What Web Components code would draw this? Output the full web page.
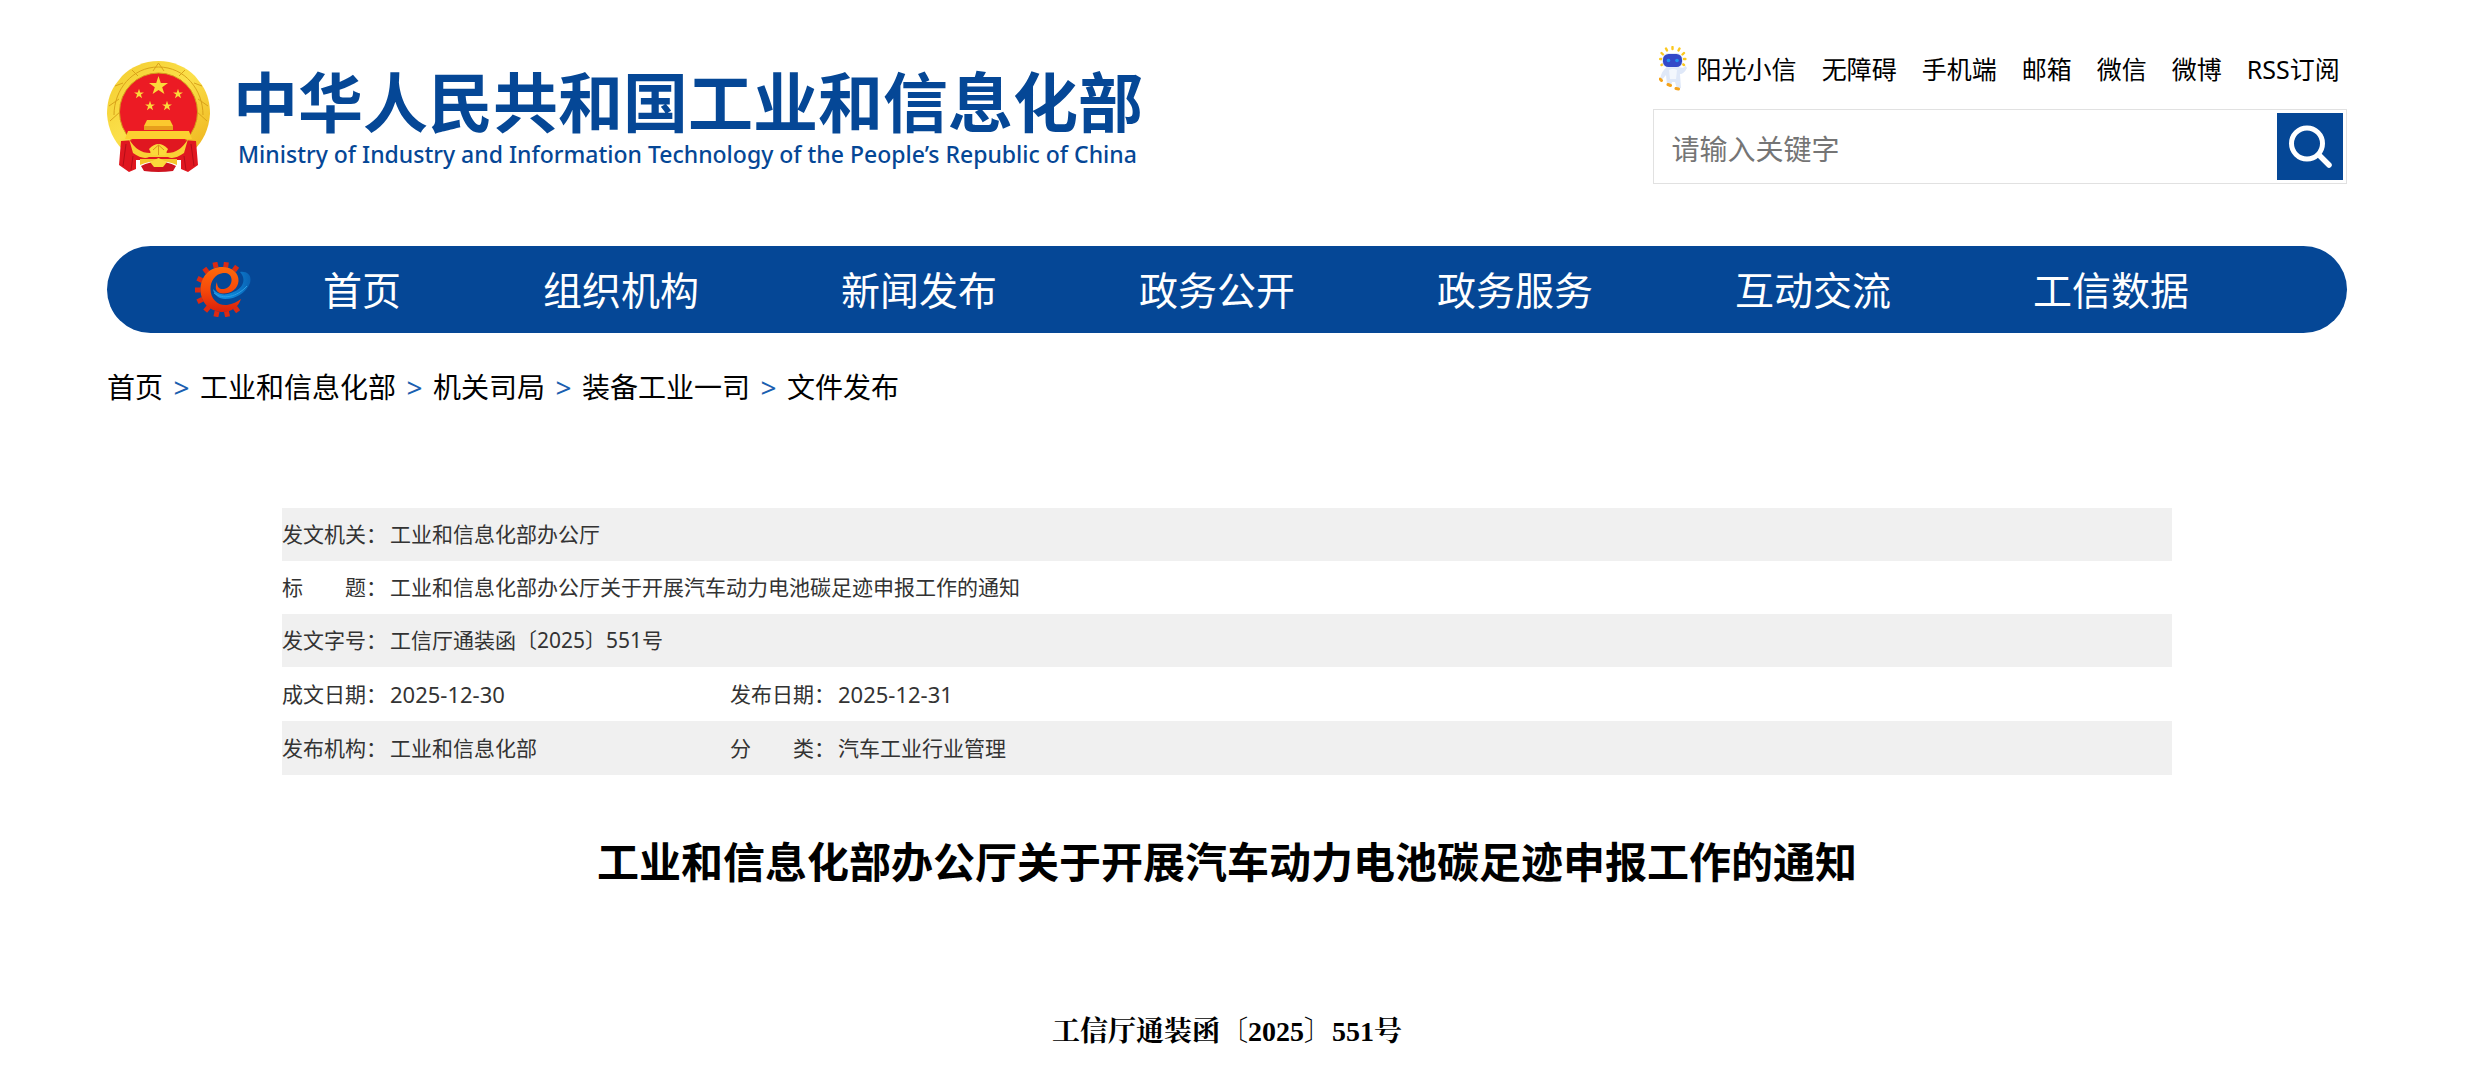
<!DOCTYPE html>
<html lang="zh-CN">
<head>
<meta charset="utf-8">
<title>工业和信息化部办公厅关于开展汽车动力电池碳足迹申报工作的通知</title>
<style>
  body {
    margin: 0;
    background: #fff;
    color: #000;
    font-family: "Noto Sans", "Noto Sans CJK SC", sans-serif;
    --brand: #054796;
    --serif: "Liberation Serif", "Noto Serif CJK SC", "Noto Sans CJK SC", serif;
  }
</style>
</head>
<body>
<miit-page></miit-page>
<script>
const define = (name, html) => {
  const template = document.createElement('template');
  template.innerHTML = html;
  customElements.define(name, class extends HTMLElement {
    constructor() {
      super();
      this.attachShadow({ mode: 'open' }).append(template.content.cloneNode(true));
    }
  });
};

define('national-emblem', `
<style>:host{display:block;flex:none}svg{display:block;width:103px;height:111px}</style>
<svg viewBox="0 0 103 111" role="img" aria-label="国徽">
  <defs>
    <path id="s" d="M0-10 2.3-3.1 9.5-3.1 3.7 1.2 5.9 8.1 0 3.9-5.9 8.1-3.7 1.2-9.5-3.1-2.3-3.1Z"/>
    <linearGradient id="g" x1="0" y1="0" x2="1" y2="1"><stop offset="0" stop-color="#f3cb2d"/><stop offset=".5" stop-color="#fbe04a"/><stop offset="1" stop-color="#eeb31c"/></linearGradient>
  </defs>
  <path d="M51.500 0C66 0 79 6 88 15L95 24C101 33 103 43 103 53C102 68 96 80 88 88H15C7 80 1 68 0 53C0 43 2 33 8 24L15 15C24 6 37 0 51.500 0Z" fill="url(#g)"/>
  <g fill="none" stroke="#d9a21a" stroke-width="1">
    <path d="M7 54C7 29 25 6 51.500 6S96 29 96 54M3 60 14 50M100 60 89 50M46 10 51.500 2 57 10M8 25 16 22M95 25 87 22M2 45 12 38M101 45 91 38M25 9 31 15M78 9 72 15"/>
  </g>
  <circle cx="51.500" cy="51" r="39" fill="#ec1b24" stroke="#d59a1b" stroke-width="1"/>
  <g fill="#fbd93a">
    <use href="#s" transform="translate(51.500 25)"/>
    <use href="#s" transform="translate(32 33) scale(.52)"/>
    <use href="#s" transform="translate(71 33) scale(.52)"/>
    <use href="#s" transform="translate(43 45) scale(.52)"/>
    <use href="#s" transform="translate(60 45) scale(.52)"/>
  </g>
  <path d="M40 59H63L66 65V68H37V65Z" fill="#fbc92e"/>
  <path d="M37 65H66V69H37Z" fill="#e79f1c"/>
  <path d="M21 70H82L85 78H18Z" fill="#fccf30"/>
  <path d="M14 80Q51 76 89 80L91 104 81 111 74 108V99H29V108L22 111 12 104Z" fill="#e01720"/>
  <path d="M22 78Q30 92 43 92L51.500 83 60 92Q73 92 81 78L77 92Q67 99 61 96H42Q36 99 26 92Z" fill="#f9d035"/>
  <path d="M42 88Q51.500 78 61 88L58 94H45Z" fill="#fbd93a"/>
  <path d="M46 89 51.500 84 57 89M51.500 84V94" fill="none" stroke="#d9941c"/>
  <path d="M33 98H70V104Q51.500 96 33 104Z" fill="#f4c52b"/>
  <path d="M34 105Q51.500 96 69 105L66 110Q51.500 112 37 110Z" fill="#cf1420"/>
  <path d="M43 101 51.500 97 60 101 56 106H47Z" fill="#fbd93a"/>
  <path d="M19 83 16 105M84 83 87 105M26 95 24 109M77 95 79 109" stroke="#b30e18" fill="none"/>
</svg>`);

define('site-brand', `
<style>
:host{display:flex;gap:23px;padding-top:15px}
.names{display:flex;flex-direction:column;color:var(--brand);white-space:nowrap;padding-top:5px}
h1{margin:0;font-size:65px;line-height:72px;font-weight:700}
p{margin:0;padding-left:5px;font-size:23px;line-height:32px;font-weight:500}
</style>
<national-emblem></national-emblem>
<div class="names"><h1>中华人民共和国工业和信息化部</h1>
<p lang="en">Ministry of Industry and Information Technology of the People’s Republic of China</p></div>`);

define('robot-icon', `
<style>:host{display:block;flex:none}svg{display:block;width:28px;height:45px}</style>
<svg viewBox="0 0 28 45" aria-hidden="true">
  <g stroke="#fbc81f" stroke-width="2.400" stroke-linecap="round">
    <path d="M13.500 1V3M7 2.500 8 4.500M20.500 2.500 19.500 4.500M2.500 7 4 8.500M25 7 23.500 8.500M1.200 13H2.600M26.400 13H25M2.500 19 3.600 18.200M25 19 24 18.200"/>
  </g>
  <path d="M8 21Q13 19 19 21Q27 23 26 19L28 22Q25 28 21 28L22 42 18 43 16 36 13 36 12 40 8 39 7 29 2 35 1 33Q3 24 8 21Z" fill="#dfe8f8"/>
  <path d="M10 24Q14 22 18 24L17 33H11Z" fill="#f3f7fd"/>
  <rect x="3" y="7" width="21" height="15" rx="7" fill="#e3ebfa"/>
  <rect x="4" y="8" width="19" height="13" rx="5.500" fill="#3349c8"/>
  <circle cx="9.500" cy="14.500" r="1.800" fill="#2292ee"/><circle cx="18" cy="14.500" r="1.800" fill="#2292ee"/>
  <path d="M1 33 2.500 34.500M9 38.500 11.500 39.500M17 42.500 19.500 43" stroke="#f5a31b" stroke-width="3" stroke-linecap="round"/>
</svg>`);

define('utility-links', `
<style>
:host{display:block}
nav{display:flex;align-items:center;gap:25px;padding-left:6px}
a{display:flex;align-items:center;gap:10px;color:#000;text-decoration:none;font-size:25px;line-height:36px;white-space:nowrap}
</style>
<nav aria-label="快捷入口">
<a href="#"><robot-icon></robot-icon>阳光小信</a><a href="#">无障碍</a><a href="#">手机端</a><a href="#">邮箱</a><a href="#">微信</a><a href="#">微博</a><a href="#">RSS订阅</a>
</nav>`);

define('site-search', `
<style>
:host{display:block}
form{display:flex;align-items:center;gap:12px;box-sizing:border-box;height:75px;border:1px solid #e1e1e1;padding:0 3px 0 18px}
input{flex:1;min-width:0;box-sizing:border-box;border:0;outline:0;padding:4px 0 0;background:none;font:inherit;font-size:28px;line-height:40px;color:#333;height:67px}
input::placeholder{color:#757575;opacity:1}
button{border:0;padding:0;width:66px;height:67px;background:var(--brand);cursor:pointer}
svg{display:block;width:66px;height:67px}
</style>
<form role="search" onsubmit="return false">
<input type="text" placeholder="请输入关键字" aria-label="请输入关键字">
<button type="submit" aria-label="搜索"><svg viewBox="0 0 66 67" fill="none" stroke="#fff" stroke-linecap="round"><circle cx="30" cy="30.500" r="15.500" stroke-width="5"/><path d="M42 42 52 52" stroke-width="5.500"/></svg></button>
</form>`);

define('site-header', `
<style>
:host{display:flex;justify-content:space-between;align-items:flex-start;padding:46px 0 62px}
.tools{flex:0 0 31%;display:flex;flex-direction:column;gap:18px}
</style>
<site-brand></site-brand>
<div class="tools"><utility-links></utility-links><site-search></site-search></div>`);

define('gear-logo', `
<style>:host{display:block;flex:none}svg{display:block;width:56px;height:55px}</style>
<svg viewBox="0 0 56 55" aria-hidden="true">
  <defs>
    <linearGradient id="o" x1="0" y1="0" x2="0" y2="1"><stop offset="0" stop-color="#ff6a0a"/><stop offset=".5" stop-color="#f64a0a"/><stop offset="1" stop-color="#d9200c"/></linearGradient>
    <linearGradient id="b" x1="0" y1="0" x2="1" y2="0"><stop offset="0" stop-color="#1c8fe0"/><stop offset=".5" stop-color="#0c84d6"/><stop offset="1" stop-color="#0a62b4"/></linearGradient>
  </defs>
  <g fill="#dc2a12">
    <rect x="-2.500" y="-2.800" width="5" height="5.600" transform="translate(20.500 3) rotate(-12)"/>
    <rect x="-2.500" y="-2.800" width="5" height="5.600" transform="translate(31 3) rotate(8)"/>
    <rect x="-2.500" y="-2.800" width="5" height="5.600" transform="translate(40.500 6.500) rotate(35)"/>
    <rect x="-2.500" y="-2.800" width="5" height="5.600" transform="translate(11 8.500) rotate(-38)"/>
    <rect x="-2.500" y="-2.800" width="5" height="5.600" transform="translate(5 17.500) rotate(-65)"/>
    <rect x="-2.500" y="-2.800" width="5" height="5.600" transform="translate(2.800 28) rotate(-90)"/>
    <rect x="-2.500" y="-2.800" width="5" height="5.600" transform="translate(5 38.500) rotate(65)"/>
    <rect x="-2.500" y="-2.800" width="5" height="5.600" transform="translate(12 47) rotate(40)"/>
    <rect x="-2.500" y="-2.800" width="5" height="5.600" transform="translate(21.500 52) rotate(12)"/>
    <rect x="-2.500" y="-2.800" width="5" height="5.600" transform="translate(32 52) rotate(-12)"/>
    <rect x="-2.500" y="-2.800" width="5" height="5.600" transform="translate(41.500 47.500) rotate(-35)"/>
  </g>
  <path d="M45 10C53 9 57 14 55 21C51 31 41 37 30 37C24 37 19 33 18 27C22 32 29 34 36 31C46 28 53 19 45 10Z" fill="url(#b)"/>
  <path d="M19 31C28 38 42 35 52 24" fill="none" stroke="#2a9fe6" stroke-width="1"/>
  <path d="M46 37C43 46 35 50.500 26 50C14 49 5.500 40 5.500 28C5.500 15 14 5 27 5C37 5 44 11 43.500 19C43 27 36 31.500 28 31.500C22 31.500 19 27 22 20C22 26 25 27.500 29 27C34 26 37 22 36.500 17C36 12 32 10.500 28 11C20 12 15.500 19 15.500 27C15.500 37 23 44 32 43C38 42 42 40 46 37Z" fill="url(#o)"/>
</svg>`);

define('site-nav', `
<style>
:host{display:block}
nav{display:flex;align-items:center;gap:72px;height:87px;padding-left:88px;border-radius:44px;background:var(--brand)}
ul{display:flex;gap:142px;list-style:none;margin:0;padding:0}
a{display:block;color:#fff;text-decoration:none;font-size:39px;line-height:56px;white-space:nowrap}
</style>
<nav aria-label="主导航"><gear-logo></gear-logo>
<ul><li><a href="#">首页</a></li><li><a href="#">组织机构</a></li><li><a href="#">新闻发布</a></li><li><a href="#">政务公开</a></li><li><a href="#">政务服务</a></li><li><a href="#">互动交流</a></li><li><a href="#">工信数据</a></li></ul></nav>`);

define('bread-crumb', `
<style>
:host{display:block;padding-top:34px}
ol{display:flex;list-style:none;margin:0;padding:0;font-size:28px;line-height:40px}
li{display:flex}
li+li::before{content:">";width:37px;text-align:center;color:#1a5fb0}
a{color:#000;text-decoration:none}
</style>
<nav aria-label="当前位置"><ol><li><a href="#">首页</a></li><li><a href="#">工业和信息化部</a></li><li><a href="#">机关司局</a></li><li><a href="#">装备工业一司</a></li><li><a href="#">文件发布</a></li></ol></nav>`);

define('document-meta', `
<style>
:host{display:block}
table{width:100%;table-layout:fixed;border-collapse:collapse;font-size:21px;line-height:30px;color:#333}
.k{width:108px}.v{width:340px}
th,td{box-sizing:border-box;padding:0 0 2px;height:53px;text-align:left;font-weight:400;white-space:nowrap}
tr:nth-child(n+4)>*{height:54px;padding:0}
tr:nth-child(odd){background:#f0f0f0}
td.date{font-size:22px}
</style>
<table><colgroup><col class="k"><col class="v"><col class="k"><col></colgroup><tbody>
<tr><th scope="row">发文机关：</th><td colspan="3">工业和信息化部办公厅</td></tr>
<tr><th scope="row">标　　题：</th><td colspan="3">工业和信息化部办公厅关于开展汽车动力电池碳足迹申报工作的通知</td></tr>
<tr><th scope="row">发文字号：</th><td colspan="3">工信厅通装函〔2025〕551号</td></tr>
<tr><th scope="row">成文日期：</th><td class="date">2025-12-30</td><th scope="row">发布日期：</th><td class="date">2025-12-31</td></tr>
<tr><th scope="row">发布机构：</th><td>工业和信息化部</td><th scope="row">分　　类：</th><td>汽车工业行业管理</td></tr>
</tbody></table>`);

define('document-article', `
<style>
:host{display:block;padding:101px 175px 0}
h2{margin:55px 0 0;font-size:42px;line-height:64px;font-weight:700;text-align:center}
.number{margin:118px 0 0;font-family:var(--serif);font-size:28px;line-height:40px;font-weight:700;text-align:center}
</style>
<article><document-meta></document-meta>
<h2><slot name="title"></slot></h2>
<p class="number"><slot name="number"></slot></p></article>`);

define('miit-page', `
<style>:host{display:block;padding:0 122px 0 107px}</style>
<site-header></site-header>
<site-nav></site-nav>
<main><bread-crumb></bread-crumb>
<document-article><span slot="title">工业和信息化部办公厅关于开展汽车动力电池碳足迹申报工作的通知</span><span slot="number">工信厅通装函〔2025〕551号</span></document-article></main>`);
</script>
</body>
</html>
